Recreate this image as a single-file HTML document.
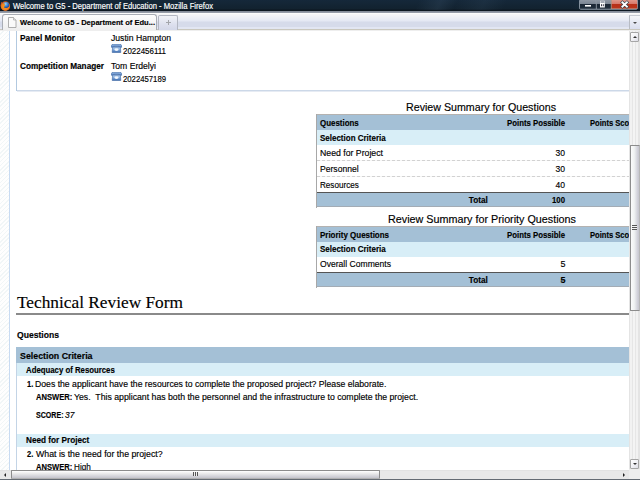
<!DOCTYPE html>
<html><head><meta charset="utf-8">
<style>
*{margin:0;padding:0;box-sizing:border-box}
html,body{width:640px;height:480px;overflow:hidden;background:#fff}
body{position:relative;font-family:"Liberation Sans", sans-serif;color:#000}
.a{position:absolute}
.t{position:absolute;white-space:pre;line-height:1;-webkit-text-stroke:0.15px currentColor}
#content{left:0;top:0;width:629px;height:470px;overflow:hidden;background:#fff}
#hatch{left:0;top:31px;width:9px;height:439px;background:repeating-linear-gradient(135deg,#fefefe 0,#fefefe 2px,#f1f6f7 2px,#f1f6f7 3px)}
#vline{left:9px;top:31px;width:1px;height:439px;background:#c8dbf2}
.hdr{background:#a4c0d6}
.sel{background:#d8eef7}
.dash{height:1px;background:repeating-linear-gradient(90deg,#d2d2d2 0,#d2d2d2 3px,#f6f6f6 3px,#f6f6f6 5px)}
#titlebar{left:0;top:0;width:640px;height:11px;background:linear-gradient(#15283a 0,#12222f 9px,#0c1620 10px,#0c1620 11px)}
#titlestreak{left:0;top:0;width:640px;height:10px;background:linear-gradient(115deg,rgba(70,95,120,0) 0,rgba(70,95,120,0) 380px,rgba(70,95,120,.22) 400px,rgba(70,95,120,0) 415px,rgba(70,95,120,.15) 440px,rgba(70,95,120,0) 460px,rgba(70,95,120,0) 520px,rgba(70,95,120,.15) 545px,rgba(70,95,120,0) 570px)}
#tabbar{left:0;top:11px;width:640px;height:20px;background:linear-gradient(#7d8592 0,#9da3ae 2px,#fcfcfc 2px,#fcfcfc 3px,#f5f5f7 3.5px,#eceef5 7px,#e4e8f3 10px,#d6dbea 11px,#d6dbea 16px,#e2e6f2 16.5px,#e2e6f2 17.5px,#c9c7bd 18px,#c9c7bd 19.5px,#eeeeee 19.5px)}
#vscroll{left:629px;top:31px;width:11px;height:439px;background:linear-gradient(90deg,#e4e4e4 0,#e4e4e4 1px,#f2f2f2 1px,#f2f2f2 3px,#e6e6e6 3px,#e6e6e6 4px,#f4f4f4 4px,#f4f4f4 6px,#e6e6e6 6px,#e6e6e6 7px,#f2f2f2 7px,#f2f2f2 9px,#e4e4e4 9px)}
#hscroll{left:0;top:470px;width:629px;height:9px;background:linear-gradient(#dcdcdc 0,#e8e8e8 1px,#e8e8e8)}
#corner{left:629px;top:469px;width:11px;height:10px;background:#eeeeee}
#bottomborder{left:0;top:479px;width:640px;height:1px;background:#646b73}
</style></head><body>
<div class="a" id="content">
  <div class="a" id="hatch"></div>
  <div class="a" id="vline"></div>
  <!-- panel box -->
  <div class="a" style="left:16px;top:20px;width:1px;height:71px;background:#b2c9e0"></div><div class="a" style="left:17px;top:90px;width:700px;height:1px;background:#ccd8e8"></div><div class="a" style="left:17px;top:91px;width:700px;height:1px;background:#e6ebf3"></div>
  <!-- phone icons -->
  <svg class="a" style="left:110.5px;top:43.7px" width="11" height="9.2" viewBox="0 0 11 10" preserveAspectRatio="none"><defs><linearGradient id="pg1" x1="0" y1="0" x2="0" y2="1"><stop offset="0" stop-color="#b9d4f2"/><stop offset="0.5" stop-color="#7ea6da"/><stop offset="1" stop-color="#3d6cb0"/></linearGradient><linearGradient id="ph1" x1="0" y1="0" x2="0" y2="1"><stop offset="0" stop-color="#9cbde6"/><stop offset="1" stop-color="#4f7fc0"/></linearGradient></defs><path d="M0.4 1.4 Q0.8 0.3 2.2 0.3 L8.8 0.3 Q10.2 0.3 10.6 1.4 L10.6 3.6 L8.4 3.6 L8 2.6 L3 2.6 L2.6 3.6 L0.4 3.6 Z" fill="url(#ph1)" stroke="#2f5c9c" stroke-width="0.6"/><path d="M1.6 3.4 L9.4 3.4 L9.8 9.2 L1.2 9.2 Z" fill="url(#pg1)" stroke="#36629f" stroke-width="0.6"/><ellipse cx="5.5" cy="6" rx="2.1" ry="1.5" fill="#f4f8fd"/></svg>
<svg class="a" style="left:110.5px;top:72px" width="11" height="9.2" viewBox="0 0 11 10" preserveAspectRatio="none"><defs><linearGradient id="pg2" x1="0" y1="0" x2="0" y2="1"><stop offset="0" stop-color="#b9d4f2"/><stop offset="0.5" stop-color="#7ea6da"/><stop offset="1" stop-color="#3d6cb0"/></linearGradient><linearGradient id="ph2" x1="0" y1="0" x2="0" y2="1"><stop offset="0" stop-color="#9cbde6"/><stop offset="1" stop-color="#4f7fc0"/></linearGradient></defs><path d="M0.4 1.4 Q0.8 0.3 2.2 0.3 L8.8 0.3 Q10.2 0.3 10.6 1.4 L10.6 3.6 L8.4 3.6 L8 2.6 L3 2.6 L2.6 3.6 L0.4 3.6 Z" fill="url(#ph2)" stroke="#2f5c9c" stroke-width="0.6"/><path d="M1.6 3.4 L9.4 3.4 L9.8 9.2 L1.2 9.2 Z" fill="url(#pg2)" stroke="#36629f" stroke-width="0.6"/><ellipse cx="5.5" cy="6" rx="2.1" ry="1.5" fill="#f4f8fd"/></svg>
  <!-- table 1 -->
  <div class="a hdr" style="left:316px;top:114px;width:331px;height:16px;border-top:1px solid #b4b2b0"></div>
  <div class="a sel" style="left:316px;top:130px;width:331px;height:14.6px"></div>
  <div class="a dash" style="left:317px;top:160px;width:330px"></div>
  <div class="a dash" style="left:317px;top:176px;width:330px"></div>
  <div class="a" style="left:316px;top:191.5px;width:331px;height:1px;background:#555"></div>
  <div class="a hdr" style="left:316px;top:192.5px;width:331px;height:14.5px;border-bottom:1px solid #a3acb5"></div>
  <div class="a" style="left:316px;top:114px;width:1px;height:94px;background:#a8a8a8"></div>
  <!-- table 2 -->
  <div class="a hdr" style="left:316px;top:226px;width:331px;height:16px;border-top:1px solid #b4b2b0"></div>
  <div class="a sel" style="left:316px;top:242px;width:331px;height:14.5px"></div>
  <div class="a" style="left:316px;top:271.5px;width:331px;height:1px;background:#555"></div>
  <div class="a hdr" style="left:316px;top:272.5px;width:331px;height:14.5px;border-bottom:1px solid #a3acb5"></div>
  <div class="a" style="left:316px;top:226px;width:1px;height:62px;background:#a8a8a8"></div>
  <!-- technical -->
  <div class="a" style="left:16px;top:313px;width:620px;height:2px;background:#8a8a8a"></div>
  <div class="a hdr" style="left:16px;top:347px;width:620px;height:16px"></div>
  <div class="a" style="left:16px;top:363px;width:1px;height:120px;background:#c3d4e6"></div>
  <div class="a sel" style="left:17px;top:363px;width:620px;height:13px"></div>
  <div class="a sel" style="left:17px;top:433.5px;width:620px;height:13px"></div>
<div class="t" style="top:34.152px;font-size:8.5px;font-family:'Liberation Sans', sans-serif;color:#000;font-weight:bold;left:20.00px;transform:scaleX(0.9786);transform-origin:0 0;">Panel Monitor</div>
<div class="t" style="top:34.152px;font-size:8.5px;font-family:'Liberation Sans', sans-serif;color:#000;left:111.00px;transform:scaleX(1.0159);transform-origin:0 0;">Justin Hampton</div>
<div class="t" style="top:47.152px;font-size:8.5px;font-family:'Liberation Sans', sans-serif;color:#000;left:123.00px;transform:scaleX(0.9345);transform-origin:0 0;">2022456111</div>
<div class="t" style="top:62.152px;font-size:8.5px;font-family:'Liberation Sans', sans-serif;color:#000;font-weight:bold;left:20.00px;transform:scaleX(0.9666);transform-origin:0 0;">Competition Manager</div>
<div class="t" style="top:62.152px;font-size:8.5px;font-family:'Liberation Sans', sans-serif;color:#000;left:111.00px;transform:scaleX(1.0134);transform-origin:0 0;">Tom Erdelyi</div>
<div class="t" style="top:75.152px;font-size:8.5px;font-family:'Liberation Sans', sans-serif;color:#000;left:123.00px;transform:scaleX(0.9095);transform-origin:0 0;">2022457189</div>
<div class="t" style="top:102.164px;font-size:10.7px;font-family:'Liberation Sans', sans-serif;color:#000;left:406.00px;transform:scaleX(0.9981);transform-origin:0 0;">Review Summary for Questions</div>
<div class="t" style="top:119.150px;font-size:9.0px;font-family:'Liberation Sans', sans-serif;color:#000;font-weight:bold;left:320.00px;transform:scaleX(0.8804);transform-origin:0 0;">Questions</div>
<div class="t" style="top:119.150px;font-size:9.0px;font-family:'Liberation Sans', sans-serif;color:#000;font-weight:bold;left:497.97px;transform:scaleX(0.8653);transform-origin:100% 0;">Points Possible</div>
<div class="t" style="top:119.150px;font-size:9.0px;font-family:'Liberation Sans', sans-serif;color:#000;font-weight:bold;left:590.00px;transform:scaleX(0.8428);transform-origin:0 0;">Points Scored</div>
<div class="t" style="top:134.166px;font-size:9.0px;font-family:'Liberation Sans', sans-serif;color:#000;font-weight:bold;left:320.00px;transform:scaleX(0.8875);transform-origin:0 0;">Selection Criteria</div>
<div class="t" style="top:149.166px;font-size:9.0px;font-family:'Liberation Sans', sans-serif;color:#000;left:320.00px;transform:scaleX(0.9688);transform-origin:0 0;">Need for Project</div>
<div class="t" style="top:149.166px;font-size:9.0px;font-family:'Liberation Sans', sans-serif;color:#000;left:555.48px;transform:scaleX(0.9485);transform-origin:100% 0;">30</div>
<div class="t" style="top:165.166px;font-size:9.0px;font-family:'Liberation Sans', sans-serif;color:#000;left:320.30px;transform:scaleX(0.9548);transform-origin:0 0;">Personnel</div>
<div class="t" style="top:165.166px;font-size:9.0px;font-family:'Liberation Sans', sans-serif;color:#000;left:555.48px;transform:scaleX(0.9485);transform-origin:100% 0;">30</div>
<div class="t" style="top:181.166px;font-size:9.0px;font-family:'Liberation Sans', sans-serif;color:#000;left:320.30px;transform:scaleX(0.9017);transform-origin:0 0;">Resources</div>
<div class="t" style="top:181.166px;font-size:9.0px;font-family:'Liberation Sans', sans-serif;color:#000;left:555.48px;transform:scaleX(0.9485);transform-origin:100% 0;">40</div>
<div class="t" style="top:196.166px;font-size:9.0px;font-family:'Liberation Sans', sans-serif;color:#000;font-weight:bold;left:467.16px;transform:scaleX(0.9115);transform-origin:100% 0;">Total</div>
<div class="t" style="top:196.166px;font-size:9.0px;font-family:'Liberation Sans', sans-serif;color:#000;font-weight:bold;left:550.47px;transform:scaleX(0.8649);transform-origin:100% 0;">100</div>
<div class="t" style="top:214.155px;font-size:10.7px;font-family:'Liberation Sans', sans-serif;color:#000;left:387.75px;transform:scaleX(1.0080);transform-origin:0 0;">Review Summary for Priority Questions</div>
<div class="t" style="top:231.166px;font-size:9.0px;font-family:'Liberation Sans', sans-serif;color:#000;font-weight:bold;left:320.30px;transform:scaleX(0.8843);transform-origin:0 0;">Priority Questions</div>
<div class="t" style="top:231.166px;font-size:9.0px;font-family:'Liberation Sans', sans-serif;color:#000;font-weight:bold;left:497.97px;transform:scaleX(0.8653);transform-origin:100% 0;">Points Possible</div>
<div class="t" style="top:231.166px;font-size:9.0px;font-family:'Liberation Sans', sans-serif;color:#000;font-weight:bold;left:590.00px;transform:scaleX(0.8428);transform-origin:0 0;">Points Scored</div>
<div class="t" style="top:245.166px;font-size:9.0px;font-family:'Liberation Sans', sans-serif;color:#000;font-weight:bold;left:320.30px;transform:scaleX(0.8875);transform-origin:0 0;">Selection Criteria</div>
<div class="t" style="top:260.166px;font-size:9.0px;font-family:'Liberation Sans', sans-serif;color:#000;left:320.30px;transform:scaleX(0.9526);transform-origin:0 0;">Overall Comments</div>
<div class="t" style="top:260.166px;font-size:9.0px;font-family:'Liberation Sans', sans-serif;color:#000;left:560.48px;">5</div>
<div class="t" style="top:276.166px;font-size:9.0px;font-family:'Liberation Sans', sans-serif;color:#000;font-weight:bold;left:467.16px;transform:scaleX(0.9115);transform-origin:100% 0;">Total</div>
<div class="t" style="top:276.166px;font-size:9.0px;font-family:'Liberation Sans', sans-serif;color:#000;font-weight:bold;left:560.48px;">5</div>
<div class="t" style="top:294.155px;font-size:17.3px;font-family:'Liberation Serif', serif;color:#000;left:17.00px;transform:scaleX(1.0012);transform-origin:0 0;">Technical Review Form</div>
<div class="t" style="top:331.154px;font-size:8.7px;font-family:'Liberation Sans', sans-serif;color:#000;font-weight:bold;left:16.60px;transform:scaleX(0.9886);transform-origin:0 0;">Questions</div>
<div class="t" style="top:352.154px;font-size:8.7px;font-family:'Liberation Sans', sans-serif;color:#000;font-weight:bold;left:20.00px;transform:scaleX(1.0144);transform-origin:0 0;">Selection Criteria</div>
<div class="t" style="top:366.154px;font-size:8.7px;font-family:'Liberation Sans', sans-serif;color:#000;font-weight:bold;left:26.40px;transform:scaleX(0.8971);transform-origin:0 0;">Adequacy of Resources</div>
<div class="t" style="top:380.154px;font-size:8.7px;font-family:'Liberation Sans', sans-serif;color:#000;font-weight:bold;left:26.50px;transform:scaleX(0.8621);transform-origin:0 0;">1.</div>
<div class="t" style="top:380.154px;font-size:8.7px;font-family:'Liberation Sans', sans-serif;color:#000;left:35.25px;transform:scaleX(0.9978);transform-origin:0 0;">Does the applicant have the resources to complete the proposed project? Please elaborate.</div>
<div class="t" style="top:393.154px;font-size:8.7px;font-family:'Liberation Sans', sans-serif;color:#000;font-weight:bold;left:35.60px;transform:scaleX(0.8744);transform-origin:0 0;">ANSWER:</div>
<div class="t" style="top:393.154px;font-size:8.7px;font-family:'Liberation Sans', sans-serif;color:#000;left:74.40px;transform:scaleX(1.0035);transform-origin:0 0;">Yes.  This applicant has both the personnel and the infrastructure to complete the project.</div>
<div class="t" style="top:411.154px;font-size:8.7px;font-family:'Liberation Sans', sans-serif;color:#000;font-weight:bold;left:35.60px;transform:scaleX(0.8137);transform-origin:0 0;">SCORE:</div>
<div class="t" style="top:411.154px;font-size:8.7px;font-family:'Liberation Sans', sans-serif;color:#000;font-style:italic;left:65.00px;transform:scaleX(0.9719);transform-origin:0 0;">37</div>
<div class="t" style="top:436.154px;font-size:8.7px;font-family:'Liberation Sans', sans-serif;color:#000;font-weight:bold;left:26.40px;transform:scaleX(0.9432);transform-origin:0 0;">Need for Project</div>
<div class="t" style="top:450.154px;font-size:8.7px;font-family:'Liberation Sans', sans-serif;color:#000;font-weight:bold;left:26.50px;transform:scaleX(0.8621);transform-origin:0 0;">2.</div>
<div class="t" style="top:450.154px;font-size:8.7px;font-family:'Liberation Sans', sans-serif;color:#000;left:35.60px;transform:scaleX(1.0083);transform-origin:0 0;">What is the need for the project?</div>
<div class="t" style="top:463.154px;font-size:8.7px;font-family:'Liberation Sans', sans-serif;color:#000;font-weight:bold;left:35.60px;transform:scaleX(0.8744);transform-origin:0 0;">ANSWER:</div>
<div class="t" style="top:463.154px;font-size:8.7px;font-family:'Liberation Sans', sans-serif;color:#000;left:74.40px;transform:scaleX(0.9427);transform-origin:0 0;">High</div>
</div>
<div class="a" id="titlebar"></div><div class="a" id="titlestreak"></div>
<div class="a" id="tabbar"></div>
<!-- firefox icon -->
<svg class="a" style="left:0;top:0" width="12" height="12" viewBox="0 0 12 12">
<defs><radialGradient id="ffo" cx="0.5" cy="0.55" r="0.55"><stop offset="0" stop-color="#f7a21b"/><stop offset="0.7" stop-color="#f08020"/><stop offset="1" stop-color="#c8501a"/></radialGradient>
<radialGradient id="ffb" cx="0.4" cy="0.3" r="0.7"><stop offset="0" stop-color="#9fd6f5"/><stop offset="0.5" stop-color="#3c86d8"/><stop offset="1" stop-color="#1b3d8c"/></radialGradient></defs>
<circle cx="5.4" cy="6" r="4.7" fill="url(#ffo)"/>
<circle cx="6.1" cy="5.2" r="3.1" fill="url(#ffb)"/>
<path d="M1.2 1.8 L2.6 3.2 L4.4 3.6 L5 5.2 L3.8 7.4 L6.6 8.2 L9.8 6.2 L9.6 8.4 L7 10.4 L4 10.5 L1.4 8.6 L0.6 5.6 Z" fill="url(#ffo)"/>
</svg>
<!-- window buttons -->
<svg class="a" style="left:578px;top:0" width="62" height="11" viewBox="0 0 62 11">
<defs>
<linearGradient id="wbg" x1="0" y1="0" x2="0" y2="1"><stop offset="0" stop-color="#8e97a3"/><stop offset="0.45" stop-color="#7b8592"/><stop offset="0.5" stop-color="#1c2735"/><stop offset="0.85" stop-color="#1f2c3a"/><stop offset="1" stop-color="#3b4756"/></linearGradient>
<linearGradient id="wbr" x1="0" y1="0" x2="0" y2="1"><stop offset="0" stop-color="#e0978a"/><stop offset="0.45" stop-color="#d6786a"/><stop offset="0.5" stop-color="#b83018"/><stop offset="0.85" stop-color="#b8341c"/><stop offset="1" stop-color="#d48066"/></linearGradient>
</defs>
<rect x="1.5" y="-1" width="58" height="10.3" rx="1.5" fill="#5d6874" stroke="#9aa6b2" stroke-width="0.8"/>
<rect x="2" y="0" width="16" height="8.8" fill="url(#wbg)"/>
<rect x="18.6" y="0" width="14.4" height="8.8" fill="url(#wbg)"/>
<rect x="33.4" y="0" width="25.8" height="8.8" fill="url(#wbr)"/>
<line x1="18.3" y1="0" x2="18.3" y2="9" stroke="#aab2bc" stroke-width="0.6"/>
<line x1="33.2" y1="0" x2="33.2" y2="9" stroke="#c8b090" stroke-width="0.6"/>
<rect x="7" y="5" width="6" height="1.6" fill="#fff"/>
<rect x="22.5" y="1" width="4" height="2" fill="none" stroke="#dfe3e8" stroke-width="0.7"/>
<rect x="22" y="3" width="4.8" height="4.5" fill="#fff"/>
<rect x="23" y="4.2" width="0.9" height="2" fill="#223"/><rect x="24.8" y="4.2" width="0.9" height="2" fill="#223"/>
<path d="M44.4 2.4 L48.9 6.6 M48.9 2.4 L44.4 6.6" stroke="#33404c" stroke-width="3.2" stroke-linecap="square"/>
<path d="M44.4 2.4 L48.9 6.6 M48.9 2.4 L44.4 6.6" stroke="#fff" stroke-width="1.9" stroke-linecap="square"/>
</svg>
<!-- tab -->
<div class="a" style="left:2px;top:14px;width:155px;height:16px;background:linear-gradient(#fdfdfd,#eeeeee);border:1px solid #a9adb5;border-bottom:0;border-radius:3px 3px 0 0"></div>
<svg class="a" style="left:8px;top:17px" width="9" height="11" viewBox="0 0 9 11"><path d="M0.5 0.5 L5.5 0.5 L8 3 L8 10.5 L0.5 10.5 Z" fill="#fafafa" stroke="#9c9c9c" stroke-width="0.8"/><path d="M5.5 0.5 L5.5 3 L8 3" fill="#e8e8e8" stroke="#9c9c9c" stroke-width="0.6"/></svg>
<div class="a" style="left:158px;top:15px;width:20px;height:15px;background:linear-gradient(#f2f3f8,#dde0ee 60%,#d3d7e8);border:1px solid #b3b7c2;border-bottom:0;border-radius:2px 2px 0 0"></div>
<div class="a" style="left:165.5px;top:22px;width:5px;height:1px;background:#a4a6ac"></div>
<div class="a" style="left:167.5px;top:20px;width:1px;height:5px;background:#a4a6ac"></div>
<!-- dropdown -->
<div class="a" style="left:629px;top:15px;width:11px;height:14px;background:linear-gradient(#f6f7fa,#e6e9f3 50%,#dadeee);border-left:1px solid #b8bcc4;border-top:1px solid #c8ccd4"></div>
<div class="a" style="left:633px;top:21.5px;width:0;height:0;border-left:2px solid transparent;border-right:2px solid transparent;border-top:2px solid #4a4a4a"></div>
<!-- scrollbars -->
<div class="a" id="vscroll"></div>
<div class="a" style="left:630px;top:32px;width:9px;height:10px;background:linear-gradient(135deg,#ffffff,#f2f2f6 50%,#dedee6);border:1px solid #a6a6a6;border-radius:1px"></div>
<div class="a" style="left:632.5px;top:35.5px;width:0;height:0;border-left:2px solid transparent;border-right:2px solid transparent;border-bottom:2px solid #333"></div>
<div class="a" style="left:630px;top:145px;width:10px;height:166px;background:linear-gradient(90deg,#fbfbfb 0,#f0f2f2 40%,#d2d2da 80%,#c6c6ce);border:1px solid #8c8c8c;border-right-color:#b8b8b8;border-radius:1px"></div>
<div class="a" style="left:632px;top:225px;width:5px;height:5px;background:repeating-linear-gradient(#555 0,#555 1px,#f4f4f4 1px,#f4f4f4 2px)"></div>
<div class="a" style="left:630px;top:459px;width:9px;height:10px;background:linear-gradient(135deg,#ffffff,#f2f2f6 50%,#dedee6);border:1px solid #a6a6a6;border-radius:1px"></div>
<div class="a" style="left:632.5px;top:463px;width:0;height:0;border-left:2px solid transparent;border-right:2px solid transparent;border-top:2px solid #333"></div>
<div class="a" id="hscroll"></div>
<div class="a" style="left:4px;top:472.5px;width:0;height:0;border-top:2px solid transparent;border-bottom:2px solid transparent;border-right:2.5px solid #222"></div>
<div class="a" style="left:11px;top:470px;width:369px;height:9px;background:linear-gradient(#ffffff 0,#eeeeee 30%,#d0d0d6 80%,#c4c4cc);border:1px solid #8c8c8c;border-bottom-color:#b0b0b0;border-radius:1px"></div>
<div class="a" style="left:193px;top:472px;width:5px;height:4px;background:repeating-linear-gradient(90deg,#555 0,#555 1px,#eee 1px,#eee 2px)"></div>
<div class="a" style="left:622.5px;top:472.5px;width:0;height:0;border-top:2px solid transparent;border-bottom:2px solid transparent;border-left:2.5px solid #222"></div>
<div class="a" id="corner"></div>
<div class="a" id="bottomborder"></div>
<div class="t" style="top:3.156px;font-size:8.2px;font-family:'Liberation Sans', sans-serif;color:#fff;left:13.00px;transform:scaleX(0.9338);transform-origin:0 0;-webkit-text-stroke:0.15px #fff;">Welcome to G5 - Department of Education - Mozilla Firefox</div>
<div class="t" style="top:19.150px;font-size:7.8px;font-family:'Liberation Sans', sans-serif;color:#000;font-weight:bold;left:20.00px;transform:scaleX(0.9687);transform-origin:0 0;">Welcome to G5 - Department of Edu...</div>
</body></html>
